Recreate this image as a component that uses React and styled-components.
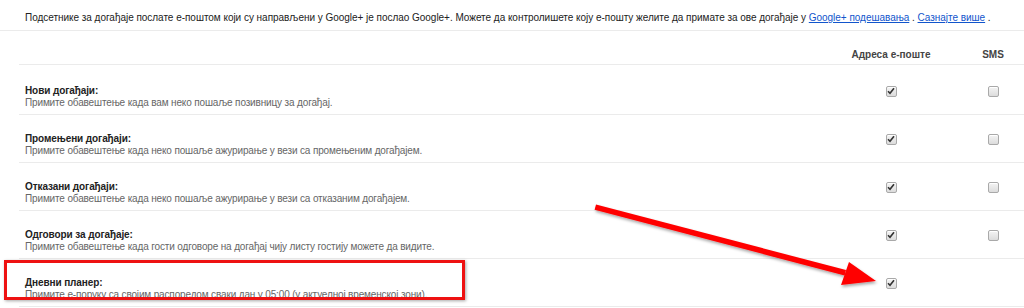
import React from 'react';
import styled, { createGlobalStyle } from 'styled-components';

const GlobalStyle = createGlobalStyle`
  html, body {
    margin: 0;
    padding: 0;
    background: #fff;
  }
  body {
    font-family: "Liberation Sans", Arial, sans-serif;
    font-size: 10px;
    color: #222;
  }
`;

const Page = styled.div`
  position: relative;
  width: 1024px;
  height: 308px;
  overflow: hidden;
  background: #fff;
`;

const Intro = styled.div`
  padding: 12px 0 6px 25px;
  line-height: 12px;
  border-bottom: 1px solid #ebebeb;
  white-space: nowrap;
  letter-spacing: -0.03px;
`;

const Link = styled.a`
  color: #1155cc;
  text-decoration: underline;
  cursor: pointer;
`;

const Table = styled.div`
  margin-left: 19px;
`;

const Row = styled.div`
  display: grid;
  grid-template-columns: 1fr 100px 62px;
  column-gap: 21px;
  align-items: center;
  padding: ${p => (p.$first ? '20px' : '18px')} 0 5px 6px;
  border-bottom: 1px solid #ebebeb;
  line-height: 12px;
`;

const HeaderRow = styled(Row)`
  padding: 18px 0 3px 6px;
`;

const HeadCell = styled.div`
  text-align: center;
  font-weight: bold;
  color: #444;
`;

const Label = styled.div`
  display: flex;
  flex-direction: column;
`;

const Title = styled.div`
  font-weight: bold;
  color: #222;
  letter-spacing: -0.1px;
`;

const Desc = styled.div`
  color: #666;
  letter-spacing: -0.15px;
`;

const Cell = styled.div`
  display: flex;
  justify-content: center;
  align-items: center;
  height: 100%;
  margin-top: -12px;
`;

const Box = styled.span`
  display: inline-flex;
  align-items: center;
  justify-content: center;
  width: 9px;
  height: 9px;
  border: 1px solid #a9a9a9;
  border-radius: 2px;
  background: linear-gradient(#f4f4f4, #dcdcdc);
  box-shadow: inset 0 1px 0 #fff;
`;

const Highlight = styled.div`
  position: absolute;
  left: 4px;
  top: 260px;
  width: 455px;
  height: 34px;
  border: 3px solid #ee1111;
  box-shadow: 1px 1px 3px rgba(0, 0, 0, 0.35);
  pointer-events: none;
`;

const ArrowLayer = styled.svg`
  position: absolute;
  left: 0;
  top: 0;
  pointer-events: none;
`;

function Checkbox({ checked }) {
  return (
    <Box>
      {checked && (
        <svg width="8" height="8" viewBox="0 0 8 8">
          <path d="M1 4.3 L3 6.3 L7 1.2" fill="none" stroke="#333" strokeWidth="1.6" />
        </svg>
      )}
    </Box>
  );
}

const rows = [
  { title: 'Нови догађаји:', desc: 'Примите обавештење када вам неко пошаље позивницу за догађај.', sms: true },
  { title: 'Промењени догађаји:', desc: 'Примите обавештење када неко пошаље ажурирање у вези са промењеним догађајем.', sms: true },
  { title: 'Отказани догађаји:', desc: 'Примите обавештење када неко пошаље ажурирање у вези са отказаним догађајем.', sms: true },
  { title: 'Одговори за догађаје:', desc: 'Примите обавештење када гости одговоре на догађај чију листу гостију можете да видите.', sms: true },
  { title: 'Дневни планер:', desc: 'Примите е-поруку са својим распоредом сваки дан у 05:00 (у актуелној временској зони).', sms: false },
];

export default function App() {
  return (
    <Page>
      <GlobalStyle />
      <Intro>
        Подсетнике за догађаје послате е-поштом који су направљени у Google+ је послао Google+. Можете да контролишете коју е-пошту желите да примате за ове догађаје у{' '}
        <Link>Google+ подешавања</Link> . <Link>Сазнајте више</Link> .
      </Intro>
      <Table>
        <HeaderRow>
          <div />
          <HeadCell>Адреса е-поште</HeadCell>
          <HeadCell>SMS</HeadCell>
        </HeaderRow>
        {rows.map((r, i) => (
          <Row key={r.title} $first={i === 0}>
            <Label>
              <Title>{r.title}</Title>
              <Desc>{r.desc}</Desc>
            </Label>
            <Cell>
              <Checkbox checked />
            </Cell>
            <Cell>{r.sms && <Checkbox />}</Cell>
          </Row>
        ))}
      </Table>
      <Highlight />
      <ArrowLayer width="1024" height="308" viewBox="0 0 1024 308">
        <defs>
          <filter id="sh" x="-10%" y="-10%" width="120%" height="130%">
            <feDropShadow dx="1" dy="2" stdDeviation="1.5" floodColor="#000" floodOpacity="0.35" />
          </filter>
        </defs>
        <g filter="url(#sh)" fill="#f00" stroke="none">
          <path d="M596 204.5 L846 270 L844.6 275.4 L594.6 209.8 Z" />
          <path d="M876 281 L841 285 L849 262 Z" />
        </g>
      </ArrowLayer>
    </Page>
  );
}
